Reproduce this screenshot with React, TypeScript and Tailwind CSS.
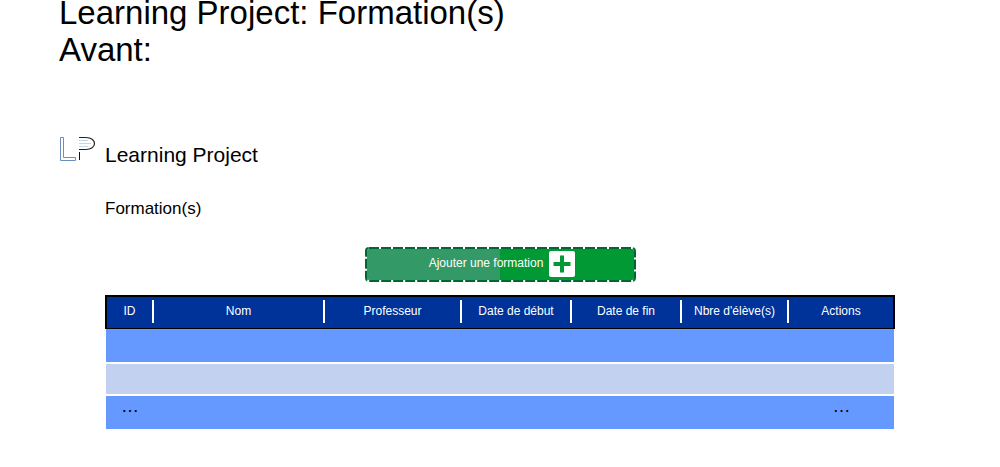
const columns = [
  { label: "ID", width: "w-[49px]" },
  { label: "Nom", width: "w-[171px]" },
  { label: "Professeur", width: "w-[137px]" },
  { label: "Date de début", width: "w-[110px]" },
  { label: "Date de fin", width: "w-[110px]" },
  { label: "Nbre d'élève(s)", width: "w-[107px]" },
  { label: "Actions", width: "w-[106px]" },
];

const rows = [
  { tone: "bg-[#6699ff] h-[33px]", filler: "" },
  { tone: "bg-[#c2d1f0] h-[30px]", filler: "" },
  { tone: "bg-[#6699ff] h-[33px]", filler: "…" },
];

const rowGaps = ["", "border-t-2", "border-t-2"];

function Logo() {
  return (
    <svg className="h-[26px] w-[38px] shrink-0" viewBox="0 0 38 26" fill="none" aria-hidden="true">
      <path d="M1.5 1.5H4.5V21.5H16.5V24.5H1.5Z" stroke="#6c8ebf" />
      <path d="M20 4.5H29M20 7.5H32M20 10.5H29" stroke="#c3d7ee" />
      <path d="M20 1.5H27C32 1.5 35.5 4 35.5 7.5C35.5 11 32 13.5 27 13.5H20" stroke="#222" strokeWidth="1.2" />
      <path d="M20.5 16V24" stroke="#111" />
    </svg>
  );
}

function AddButton() {
  return (
    <button
      type="button"
      className="relative flex h-[35px] w-[271px] items-center justify-center gap-[6px] rounded-[4px] bg-linear-to-r from-[#339966] from-50% to-[#009933] to-50% pb-[2px] text-[12px] text-white"
    >
      <svg className="absolute inset-0 size-full" fill="none" aria-hidden="true">
        <rect x="1" y="1" width="269" height="33" rx="3" stroke="#fff" strokeWidth="2" />
        <rect x="1" y="1" width="269" height="33" rx="3" stroke="#006633" strokeWidth="2" strokeDasharray="10 2" />
      </svg>
      <span className="pb-[2px] pl-[4px]">Ajouter une formation</span>
      <svg className="size-[26px]" viewBox="0 0 26 26" aria-hidden="true">
        <rect width="26" height="26" rx="2" fill="#fff" />
        <path d="M11 4.5H15V11H21.5V15H15V21.5H11V15H4.5V11H11Z" fill="#009933" />
      </svg>
    </button>
  );
}

export default function App() {
  return (
    <main className="overflow-hidden bg-white pb-9 font-['Liberation_Sans',Arial,sans-serif] text-black">
      <h1 className="-mt-[6px] px-[59px] text-[33px] leading-[37px]">
        Learning Project: Formation(s)
        <br />
        Avant:
      </h1>
      <header className="mt-[68px] flex items-start gap-2 px-[59px]">
        <Logo />
        <p className="pt-[7px] text-[21px] leading-[24px]">Learning Project</p>
      </header>
      <section className="px-[105px]">
        <h2 className="mt-[32px] text-[17px] leading-[20px]">Formation(s)</h2>
        <div className="mt-[28px] flex justify-center">
          <AddButton />
        </div>
        <table className="mt-[13px] w-full table-fixed border-separate border-spacing-0 text-center text-[12px]">
          <thead>
            <tr>
              {columns.map((column, i) => (
                <th
                  key={column.label}
                  className={`${column.width} h-[34px] border-t-2 border-b border-black bg-[#003399] p-0 pt-[3px] align-top font-normal text-white first:border-l-2 last:border-r-2`}
                >
                  <div className={`h-[23px] border-white leading-[23px] ${i < columns.length - 1 ? "border-r-2" : ""}`}>
                    {column.label}
                  </div>
                </th>
              ))}
            </tr>
          </thead>
          <tbody>
            {rows.map((row, r) => (
              <tr key={r}>
                {columns.map((column, i) => (
                  <td
                    key={column.label}
                    className={`${row.tone} ${rowGaps[r]} box-content border-white bg-clip-padding p-0 align-top text-[18px] leading-[20px] first:border-l last:border-r`}
                  >
                    {i === 0 || i === columns.length - 1 ? row.filler : ""}
                  </td>
                ))}
              </tr>
            ))}
          </tbody>
        </table>
      </section>
    </main>
  );
}
